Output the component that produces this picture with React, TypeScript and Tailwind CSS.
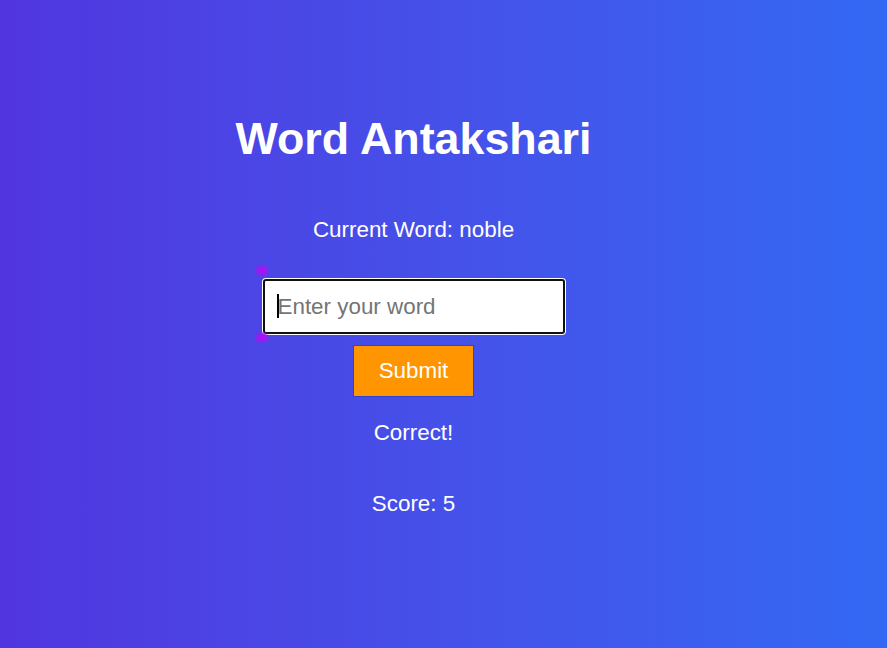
import React, { useState } from "react";

const font = { fontFamily: '"Liberation Sans", Arial, sans-serif' };

const App = () => {
  const [word, setWord] = useState("");

  return (
    <div
      className="min-h-[648px] w-full bg-gradient-to-r from-[#5035df] to-[#3268f3] text-white"
      style={font}
    >
      <div className="flex w-[827px] flex-col items-center pt-[112px] text-center">
        <h1 className="text-[44.8px] font-bold leading-[52px]">Word Antakshari</h1>

        <p className="mt-[53px] text-[22.4px] leading-[26px]">Current Word: noble</p>

        <div className="relative mt-[36px]">
          <span className="absolute left-[-7px] top-[-13px] h-[9px] w-[12px] rounded-full bg-[#a316f2] blur-[1px]" />
          <span className="absolute bottom-[-8px] left-[-7px] h-[9px] w-[12px] rounded-full bg-[#a316f2] blur-[1px]" />
          <input
            value={word}
            onChange={(e) => setWord(e.target.value)}
            placeholder="Enter your word"
            className="block h-[55px] w-[302px] rounded-[3px] border-2 border-[#101010] bg-white pl-[13px] text-[22.4px] text-black shadow-[0_0_0_1px_#ffffff] outline-none placeholder:text-[#757575]"
            style={font}
          />
          {word === "" && (
            <span className="absolute left-[14px] top-[15px] h-[24px] w-[2px] bg-black" />
          )}
        </div>

        <button
          className="mt-[11px] h-[52px] w-[121px] border border-[#2a46d0] bg-[#ff9500] text-[22.4px] leading-[26px] text-white"
          style={font}
        >
          Submit
        </button>

        <p className="mt-[23px] text-[22.4px] leading-[26px]">Correct!</p>

        <p className="mt-[45px] text-[22.4px] leading-[26px]">Score: 5</p>
      </div>
    </div>
  );
};

export default App;
